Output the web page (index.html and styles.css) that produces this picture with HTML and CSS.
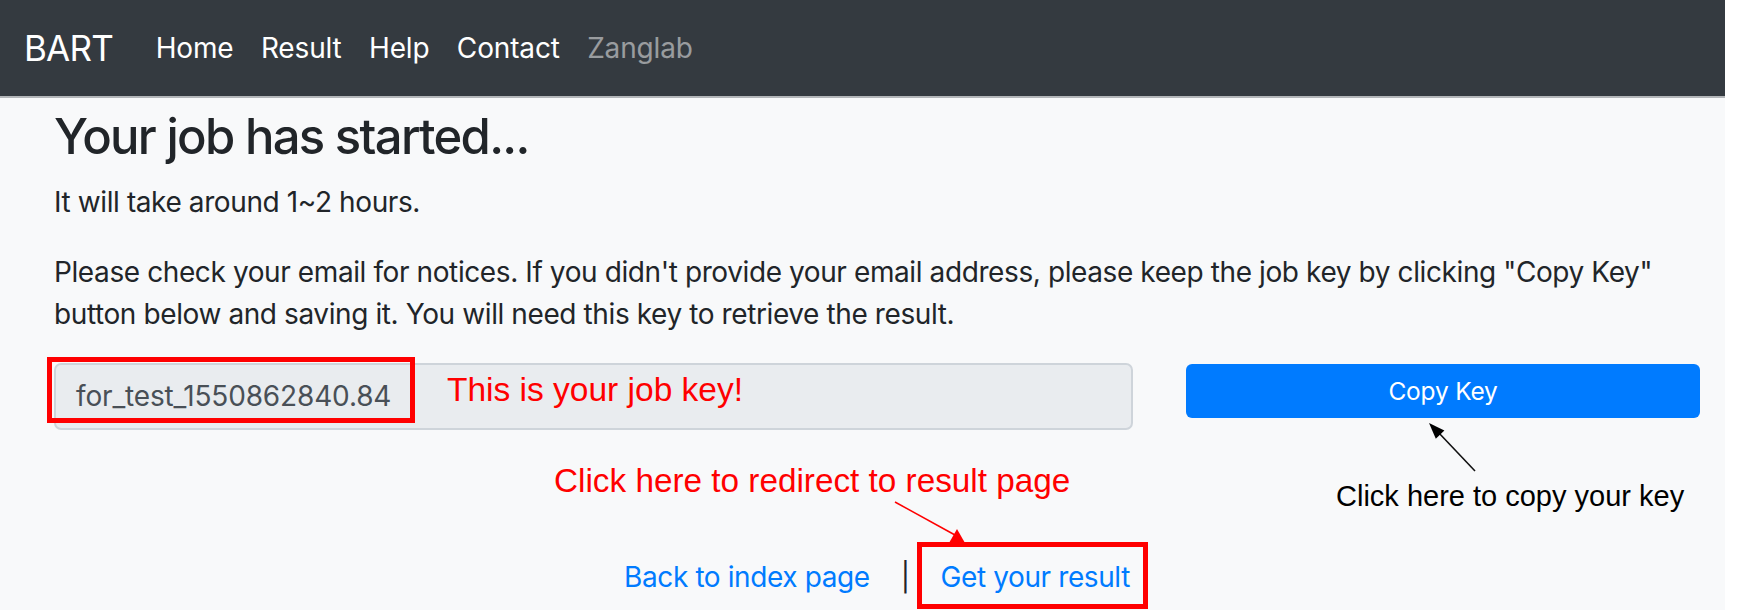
FILE: index.html
```html
<!DOCTYPE html>
<html lang="en">
<head>
<meta charset="utf-8">
<title>BART - Job started</title>
<link rel="stylesheet" href="styles.css">
</head>
<body>
<div class="page">
  <nav class="navbar">
    <a class="brand" href="#">BART</a>
    <a class="nav-link" href="#">Home</a>
    <a class="nav-link" href="#">Result</a>
    <a class="nav-link" href="#">Help</a>
    <a class="nav-link" href="#">Contact</a>
    <a class="nav-link muted" href="#">Zanglab</a>
  </nav>
  <main class="main">
    <h3 class="title">Your job has started...</h3>
    <p class="text">It will take around 1~2 hours.</p>
    <p class="text">Please check your email for notices. If you didn't provide your email address, please keep the job key by clicking "Copy Key" button below and saving it. You will need this key to retrieve the result.</p>
    <div class="key-row">
      <div class="key-input">for_test_1550862840.84</div>
      <button class="btn-copy" type="button">Copy Key</button>
    </div>
    <div class="links">
      <a class="link" href="#">Back to index page</a>
      <span class="sep">|</span>
      <a class="link" href="#">Get your result</a>
    </div>
  </main>

  <div class="annotations">
    <div class="mark mark-key"></div>
    <div class="mark mark-result"></div>
    <div class="note note-key">This is your job key!</div>
    <div class="note note-redirect">Click here to redirect to result page</div>
    <div class="note note-copy">Click here to copy your key</div>
    <svg class="arrows" width="1725" height="610" viewBox="0 0 1725 610">
      <line x1="1475" y1="471" x2="1438" y2="432" stroke="#111" stroke-width="1.6"/>
      <polygon points="1429,423 1444.4,430.4 1435.8,438.8" fill="#000"/>
      <line x1="895" y1="502" x2="955" y2="535" stroke="#ff0000" stroke-width="1.5"/>
      <polygon points="957,529 949,543 965,543" fill="#ff0000"/>
    </svg>
  </div>
</div>
</body>
</html>
```
FILE: styles.css
```css
* { box-sizing: border-box; }

html, body {
  margin: 0;
  padding: 0;
  background: #ffffff;
  overflow: hidden;
}

.page {
  position: relative;
  width: 1725px;
  height: 610px;
  background: #f8f9fa;
  font-family: "Inter", "Roboto", "Liberation Sans", sans-serif;
  color: #212529;
}

.navbar {
  height: 98px;
  background: #343a40;
  border-bottom: 2px solid #b3b6b9;
  display: flex;
  align-items: center;
  padding: 0 0 0 24px;
}

.brand {
  font-size: 35px;
  letter-spacing: -0.8px;
  color: #ffffff;
  text-decoration: none;
  margin-right: 29px;
}

.nav-link {
  font-size: 28px;
  letter-spacing: -0.15px;
  color: #ffffff;
  text-decoration: none;
  padding: 0 13.7px;
}

.nav-link.muted {
  color: rgba(255, 255, 255, 0.5);
}

.main {
  padding: 10px 25px 0 54px;
}

.title {
  font-size: 49px;
  font-weight: 500;
  letter-spacing: -1.7px;
  line-height: 1.2;
  margin: 0 0 14px;
}

.text {
  font-size: 28px;
  letter-spacing: -0.4px;
  line-height: 42px;
  margin: 0 0 28px;
}

.key-row {
  display: flex;
  align-items: flex-start;
  gap: 53px;
}

.key-input {
  width: 1079px;
  height: 67px;
  background: #e9ecef;
  border: 2px solid #ced4da;
  border-radius: 7px;
  color: #495057;
  font-size: 28px;
  letter-spacing: -0.15px;
  padding: 0 20px;
  display: flex;
  align-items: center;
}

.btn-copy {
  width: 514px;
  height: 54px;
  margin-top: 1px;
  background: #007bff;
  color: #ffffff;
  border: none;
  border-radius: 6px;
  font-family: inherit;
  font-size: 24.5px;
  letter-spacing: -0.2px;
  padding: 0;
}

.links {
  margin-top: 126px;
  display: flex;
  justify-content: center;
  gap: 31px;
  font-size: 28px;
  letter-spacing: -0.4px;
  line-height: 42px;
}

.link {
  color: #007bff;
  text-decoration: none;
}

.sep {
  color: #212529;
}

.annotations {
  position: absolute;
  inset: 0;
  pointer-events: none;
}

.arrows {
  position: absolute;
  left: 0;
  top: 0;
}

.mark {
  position: absolute;
  border: 5px solid #ff0000;
}

.mark-key {
  left: 47px;
  top: 357px;
  width: 368px;
  height: 66px;
}

.mark-result {
  left: 917px;
  top: 542px;
  width: 231px;
  height: 67px;
}

.note {
  position: absolute;
  font-family: "Liberation Sans", Arial, sans-serif;
  white-space: nowrap;
}

.note-key {
  left: 447px;
  top: 372.6px;
  font-size: 33.5px;
  line-height: 33.5px;
  color: #ff0000;
}

.note-redirect {
  left: 554px;
  top: 463.8px;
  font-size: 33.3px;
  line-height: 33.3px;
  color: #ff0000;
}

.note-copy {
  left: 1336px;
  top: 482px;
  font-size: 29px;
  line-height: 29px;
  color: #000000;
}
```
